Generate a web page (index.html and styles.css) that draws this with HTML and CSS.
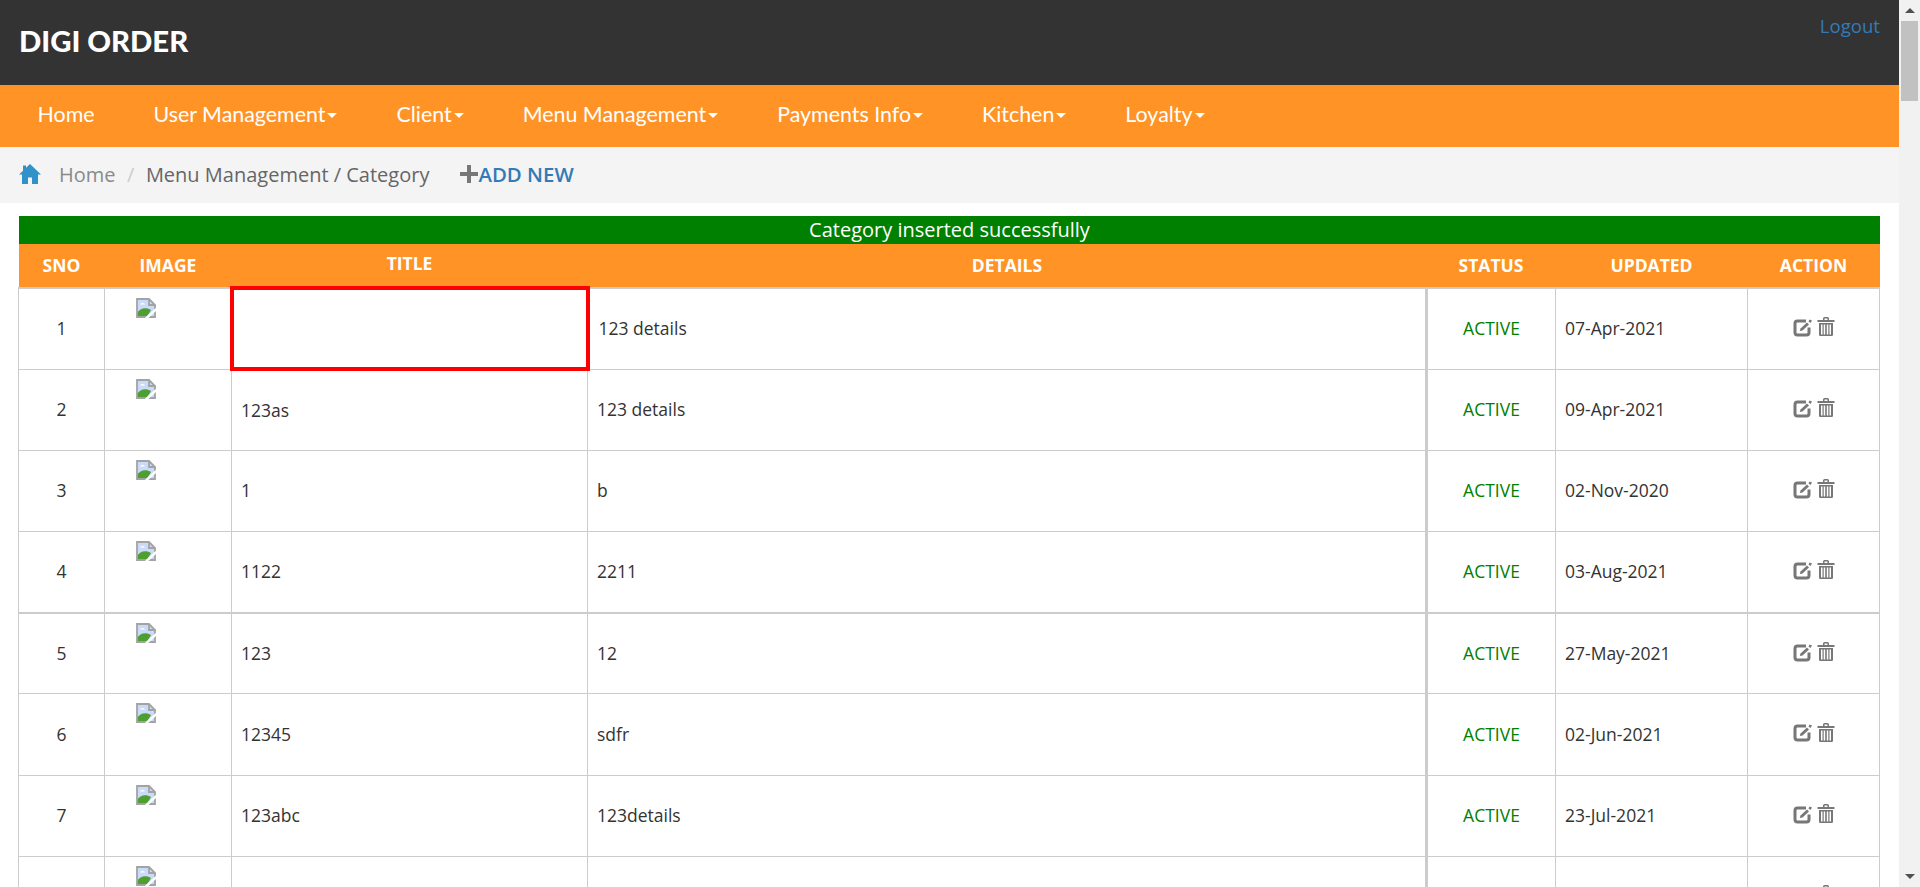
FILE: index.html
```html
<!DOCTYPE html>
<html lang="en">
<head>
<meta charset="utf-8">
<title>Digi Order</title>
<link rel="stylesheet" href="styles.css">
</head>
<body>
<svg class="sprites" width="0" height="0" aria-hidden="true">
  <symbol id="broken" viewBox="0 0 20 20">
    <path d="M1 1H13L19 7V19H1Z" fill="#c9dbf8"/>
    <path d="M1 19V15C4 10 10 9 15 12L11 19Z" fill="#4f9e32"/>
    <path d="M4 6.500C5 4.500 8 4.500 9 6.500Z" fill="#fff"/>
    <path d="M19 7V19H1V1H13L19 7H13V1" fill="none" stroke="#a3a3a3" stroke-width="1.800"/>
    <path d="M10 20.500L20.500 11" fill="none" stroke="#fff" stroke-width="2.400"/>
  </symbol>
  <symbol id="edit" viewBox="0 0 20 20">
    <path d="M13 4H4.500A2.500 2.500 0 0 0 2 6.500V15.500A2.500 2.500 0 0 0 4.500 18H13.500A2.500 2.500 0 0 0 16 15.500V10.500" fill="none" stroke="#777" stroke-width="3"/>
    <path d="M14 5.500L16 7.500L9.500 13.500L6.800 14L7.500 11.500Z" fill="#777"/>
    <path d="M16.500 2.500L19 3.500L17.500 6L15.500 4.500Z" fill="#777"/>
  </symbol>
  <symbol id="trash" viewBox="0 0 18 20">
    <path d="M0.500 3.500H17.500V5.500H0.500ZM6 3.500V2C6 1 7 0.500 8 0.500H10C11 0.500 12 1 12 2V3.500H10.500V2H7.500V3.500Z" fill="#777"/>
    <path d="M2 6.500H16V18C16 19 15.300 19.500 14.500 19.500H3.500C2.700 19.500 2 19 2 18ZM4 8V18H5.500V8ZM6.700 8V18H8.200V8ZM9.800 8V18H11.300V8ZM12.500 8V18H14V8Z" fill="#777" fill-rule="evenodd"/>
  </symbol>
</svg>
<div class="window">
  <div class="page">
    <header class="topbar">
      <h1 class="brand">DIGI ORDER</h1>
      <a class="logout" href="#">Logout</a>
    </header>
    <nav class="mainnav">
      <a class="navlink nav-home" href="#">Home</a>
      <a class="navlink nav-user" href="#">User Management<span class="caret"></span></a>
      <a class="navlink nav-client" href="#">Client<span class="caret"></span></a>
      <a class="navlink nav-menu" href="#">Menu Management<span class="caret"></span></a>
      <a class="navlink nav-pay" href="#">Payments Info<span class="caret"></span></a>
      <a class="navlink nav-kitchen" href="#">Kitchen<span class="caret"></span></a>
      <a class="navlink nav-loyalty" href="#">Loyalty<span class="caret"></span></a>
    </nav>
    <div class="crumbs">
      <svg class="home-icon" viewBox="0 0 22 20" aria-hidden="true"><path d="M11 0L22 10.500H19V20H13V13.500H9V20H3V10.500H0L4 6.700V1.500H7V3.800Z" fill="#3092c9"/></svg>
      <a class="crumb-home" href="#">Home</a>
      <span class="crumb-sep">/</span>
      <span class="crumb-current">Menu Management / Category</span>
      <a class="addnew" href="#"><svg class="plus" viewBox="0 0 18 18" aria-hidden="true"><path d="M7 0H11V7H18V11H11V18H7V11H0V7H7Z" fill="#777"/></svg>ADD NEW</a>
    </div>
    <main class="content">
      <div class="notice">Category inserted successfully</div>
      <table class="grid">
        <colgroup>
          <col class="c-sno"><col class="c-image"><col class="c-title"><col class="c-details"><col class="c-status"><col class="c-updated"><col class="c-action">
        </colgroup>
        <thead>
          <tr><th>SNO</th><th>IMAGE</th><th class="th-title">TITLE</th><th>DETAILS</th><th>STATUS</th><th>UPDATED</th><th>ACTION</th></tr>
        </thead>
        <tbody>
          <tr><td class="ctr">1</td><td class="img"><svg class="broken"><use href="#broken"/></svg></td><td class="flagged"></td><td>123 details</td><td class="active">ACTIVE</td><td>07-Apr-2021</td><td class="acts"><svg class="i-edit"><use href="#edit"/></svg><svg class="i-trash"><use href="#trash"/></svg></td></tr>
          <tr><td class="ctr">2</td><td class="img"><svg class="broken"><use href="#broken"/></svg></td><td>123as</td><td>123 details</td><td class="active">ACTIVE</td><td>09-Apr-2021</td><td class="acts"><svg class="i-edit"><use href="#edit"/></svg><svg class="i-trash"><use href="#trash"/></svg></td></tr>
          <tr><td class="ctr">3</td><td class="img"><svg class="broken"><use href="#broken"/></svg></td><td>1</td><td>b</td><td class="active">ACTIVE</td><td>02-Nov-2020</td><td class="acts"><svg class="i-edit"><use href="#edit"/></svg><svg class="i-trash"><use href="#trash"/></svg></td></tr>
          <tr class="thick"><td class="ctr">4</td><td class="img"><svg class="broken"><use href="#broken"/></svg></td><td>1122</td><td>2211</td><td class="active">ACTIVE</td><td>03-Aug-2021</td><td class="acts"><svg class="i-edit"><use href="#edit"/></svg><svg class="i-trash"><use href="#trash"/></svg></td></tr>
          <tr><td class="ctr">5</td><td class="img"><svg class="broken"><use href="#broken"/></svg></td><td>123</td><td>12</td><td class="active">ACTIVE</td><td>27-May-2021</td><td class="acts"><svg class="i-edit"><use href="#edit"/></svg><svg class="i-trash"><use href="#trash"/></svg></td></tr>
          <tr><td class="ctr">6</td><td class="img"><svg class="broken"><use href="#broken"/></svg></td><td>12345</td><td>sdfr</td><td class="active">ACTIVE</td><td>02-Jun-2021</td><td class="acts"><svg class="i-edit"><use href="#edit"/></svg><svg class="i-trash"><use href="#trash"/></svg></td></tr>
          <tr><td class="ctr">7</td><td class="img"><svg class="broken"><use href="#broken"/></svg></td><td>123abc</td><td>123details</td><td class="active">ACTIVE</td><td>23-Jul-2021</td><td class="acts"><svg class="i-edit"><use href="#edit"/></svg><svg class="i-trash"><use href="#trash"/></svg></td></tr>
          <tr><td class="ctr"></td><td class="img"><svg class="broken"><use href="#broken"/></svg></td><td></td><td></td><td class="active"></td><td></td><td class="acts"><svg class="i-edit"><use href="#edit"/></svg><svg class="i-trash"><use href="#trash"/></svg></td></tr>
        </tbody>
      </table>
    </main>
  </div>
  <div class="scrollbar" aria-hidden="true">
    <div class="arrow arrow-up"></div>
    <div class="thumb"></div>
    <div class="track"></div>
    <div class="arrow arrow-down"></div>
  </div>
</div>
</body>
</html>
```
FILE: styles.css
```css
* { box-sizing: border-box; }
html, body { margin: 0; padding: 0; height: 887px; overflow: hidden; background: #fff; }
body { font-family: "Open Sans", "Liberation Sans", sans-serif; color: #333; }
a { text-decoration: none; }
.sprites { position: absolute; }

.window { display: flex; height: 887px; }
.page { flex: 0 0 1899px; width: 1899px; height: 887px; overflow: hidden; }

.topbar { height: 85px; background: #333; display: flex; justify-content: space-between; padding: 0 19px; }
.brand { margin: 23px 0 0; font-family: Lato, sans-serif; font-size: 29.300px; line-height: 36px; font-weight: 900; color: #fff; }
.logout { margin-top: 13px; font-size: 18.600px; line-height: 26px; font-weight: 500; color: #337ab7; }

.mainnav { height: 62px; background: #ff9326; display: flex; align-items: center; padding: 0 0 4px 8px; }
.navlink { font-family: Lato, sans-serif; font-size: 21.400px; line-height: 28px; color: #fff; padding: 0 29.500px; white-space: nowrap; display: flex; align-items: center; }
.caret { display: inline-block; width: 0; height: 0; margin-left: 2px; margin-top: 3px; border-top: 5px solid #fff; border-left: 5.500px solid transparent; border-right: 5.500px solid transparent; }

.crumbs { height: 56px; background: #f4f4f4; display: flex; align-items: center; padding: 0 0 2px 19px; font-size: 20px; }
.home-icon { width: 22px; height: 20px; margin-right: 18px; }
.crumb-home { color: #8a8a8a; }
.crumb-sep { color: #ccc; margin: 0 11.500px; }
.crumb-current { color: #666; }
.addnew { display: flex; align-items: center; margin-left: 31px; color: #337ab7; font-size: 20.400px; font-weight: 600; }
.plus { width: 18px; height: 18px; }

.content { padding: 13px 19px 0 19px; }
.notice { height: 28px; background: #008000; color: #fff; text-align: center; font-size: 20px; line-height: 28px; }

.grid { width: 1861px; table-layout: fixed; border-collapse: collapse; font-size: 17.500px; margin-left: -1px; }
.c-sno { width: 86px; }
.c-image { width: 127px; }
.c-title { width: 356px; }
.c-details { width: 839px; }
.c-status { width: 129px; }
.c-updated { width: 192px; }
.c-action { width: 132px; }

.grid th { height: 44px; padding: 0 8px 1px; background: #ff9326; color: #fff; font-size: 17.500px; font-weight: 700; text-align: center; border: 0; border-bottom: 2px solid #ccc; }
.grid .th-title { padding-bottom: 5px; }
.grid td { height: 81.200px; padding: 0 9px 1px; border: 1px solid #ccc; vertical-align: middle; }
.grid td.ctr { text-align: center; }
.grid td.img { vertical-align: top; padding: 9px 0 0 31px; }
.grid td.flagged { border: 4px solid #f00; }
.grid td.active { text-align: center; color: #008000; border-left: 3px solid #ccc; }
.grid td.acts { text-align: center; padding-top: 0; padding-bottom: 8px; }
.grid .thick td { border-bottom-width: 2px; }
.broken { display: block; width: 20px; height: 20px; }
.i-edit { width: 20px; height: 20px; vertical-align: middle; margin-right: 4px; }
.i-trash { width: 18px; height: 21px; vertical-align: middle; }

.scrollbar { flex: 0 0 21px; width: 21px; height: 887px; background: #f1f1f1; display: flex; flex-direction: column; align-items: center; }
.arrow { flex: none; width: 0; height: 0; border-left: 5px solid transparent; border-right: 5px solid transparent; }
.arrow-up { margin-top: 8px; border-bottom: 5px solid #505050; }
.arrow-down { margin-bottom: 8px; border-top: 5px solid #505050; }
.thumb { flex: none; width: 17px; height: 80px; margin-top: 8px; background: #c1c1c1; }
.track { flex: 1; }
```
